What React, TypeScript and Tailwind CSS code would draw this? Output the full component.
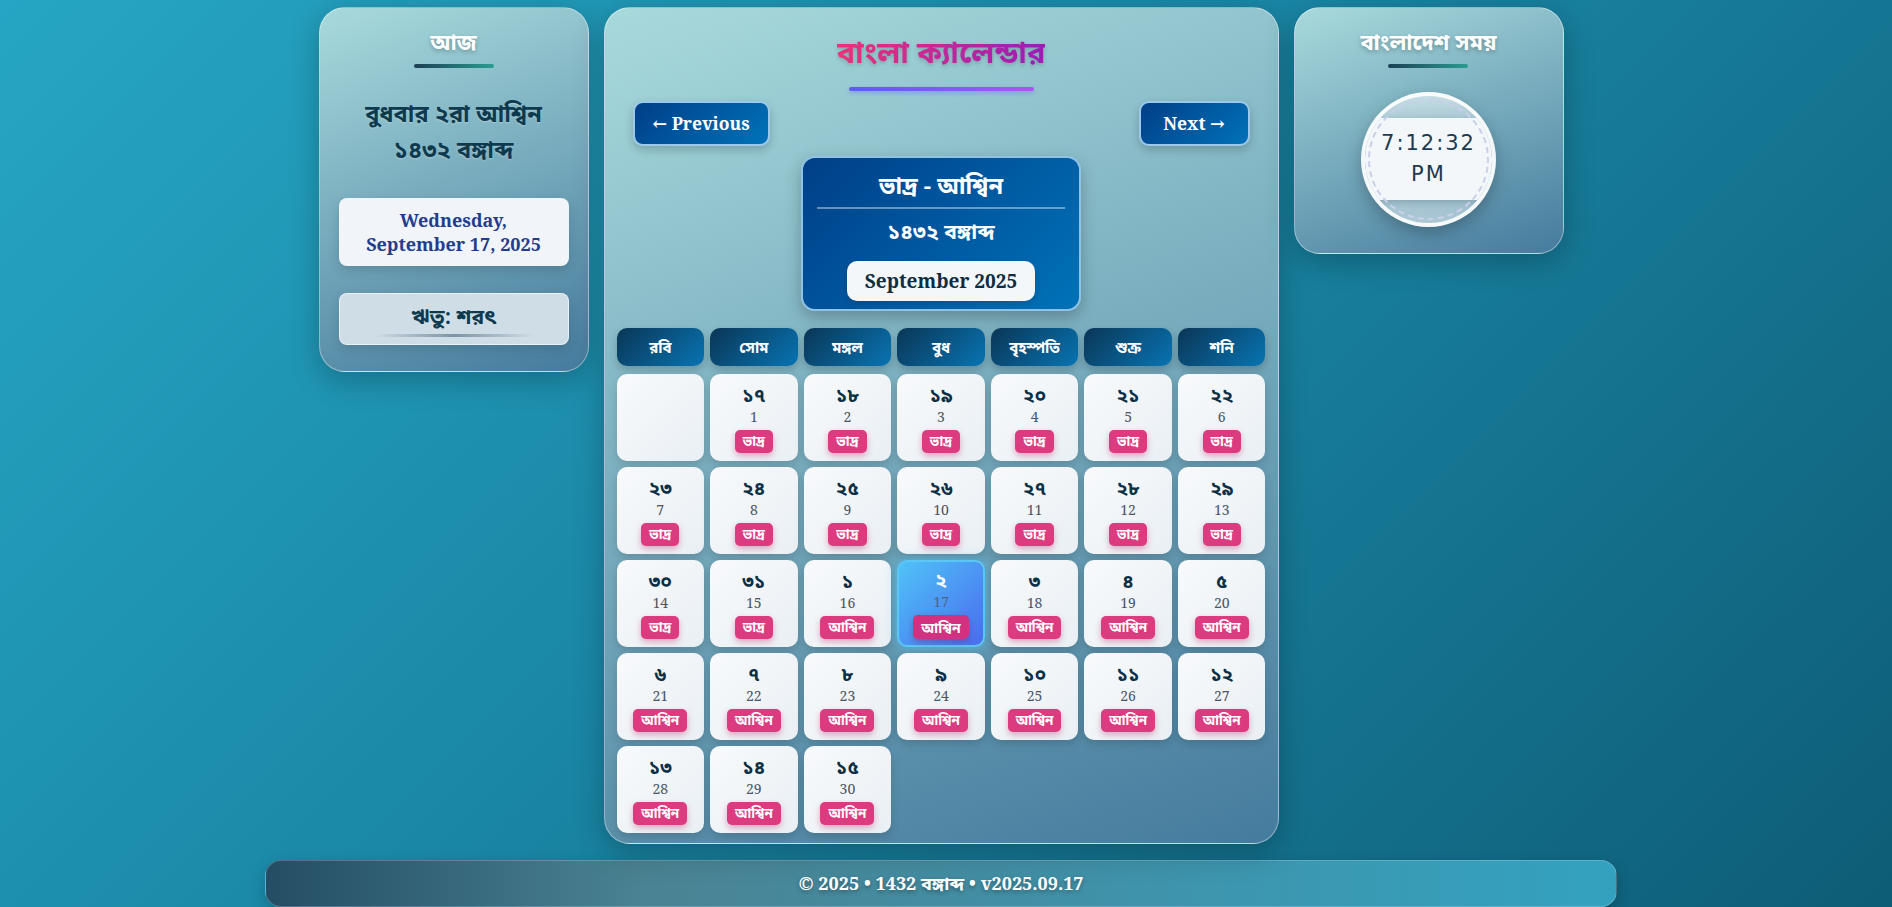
import React from "react";

const BN = ["০", "১", "২", "৩", "৪", "৫", "৬", "৭", "৮", "৯"];
const toBn = (n: number) =>
  String(n)
    .split("")
    .map((d) => BN[+d])
    .join("");

const WEEK = ["রবি", "সোম", "মঙ্গল", "বুধ", "বৃহস্পতি", "শুক্র", "শনি"];

const FONT = {
  fontFamily:
    '"Noto Serif", "Noto Sans Bengali", "Noto Serif Bengali", "DejaVu Serif", serif',
};

type Cell = { bn: string; greg: number; month: string; today: boolean } | null;

function buildCells(): Cell[] {
  const cells: Cell[] = [null];
  for (let i = 1; i <= 30; i++) {
    cells.push({
      bn: toBn(i <= 15 ? i + 16 : i - 15),
      greg: i,
      month: i <= 15 ? "ভাদ্র" : "আশ্বিন",
      today: i === 17,
    });
  }
  return cells;
}

function SideTitle({ children }: { children: React.ReactNode }) {
  return (
    <div className="flex flex-col items-center">
      <div className="text-[22px] leading-[30px] font-bold text-white [text-shadow:0_2px_4px_rgba(0,0,0,0.25)]">
        {children}
      </div>
      <div className="mt-[8px] w-[80px] h-[4px] rounded-full bg-[linear-gradient(90deg,#1d3f55,#2a9d8f)]" />
    </div>
  );
}

function DayCell({ c }: { c: Cell }) {
  if (!c)
    return (
      <div className="h-[87px] rounded-[10px] bg-[linear-gradient(135deg,#f8fafc,#e9eff4)] shadow-[0_4px_10px_rgba(0,0,0,0.15)]" />
    );
  if (c.today)
    return (
      <div className="h-[87px] rounded-[10px] border-2 border-[#5cc6f5] bg-[linear-gradient(135deg,#4fc3f7,#4a6cf0)] shadow-[0_0_12px_rgba(79,195,247,0.7)] flex flex-col items-center justify-center">
        <div className="text-[19px] leading-[24px] font-bold text-white">{c.bn}</div>
        <div className="text-[14px] leading-[20px] text-[#4a6690]">{c.greg}</div>
        <div className="mt-[3px] h-[24px] px-[8px] rounded-[5px] bg-[#d3307f] text-white text-[14px] font-bold flex items-center shadow-[0_3px_6px_rgba(120,20,80,0.35)]">
          {c.month}
        </div>
      </div>
    );
  return (
    <div className="h-[87px] rounded-[10px] bg-[linear-gradient(135deg,#f8fafc,#e9eff4)] shadow-[0_4px_10px_rgba(0,0,0,0.15)] flex flex-col items-center justify-center">
      <div className="text-[19px] leading-[24px] font-bold text-[#0b2f45]">{c.bn}</div>
      <div className="text-[14px] leading-[20px] text-[#4b5563]">{c.greg}</div>
      <div className="mt-[3px] h-[23px] px-[8px] rounded-[5px] bg-[#dd3b80] text-white text-[13.5px] font-bold flex items-center shadow-[0_3px_6px_rgba(190,24,93,0.35)]">
        {c.month}
      </div>
    </div>
  );
}

export default function App() {
  const cells = buildCells();
  const card =
    "rounded-[26px] border border-white/40 bg-[linear-gradient(160deg,#a8dadc,#457b9d)] shadow-[0_8px_30px_rgba(0,0,0,0.25)]";
  return (
    <div
      style={FONT}
      className="min-h-screen bg-[linear-gradient(135deg,#26a6c4_0%,#1a87a6_45%,#0e5c76_100%)] pt-[7px] pb-[16px] pr-[10px]"
    >
      <div className="max-w-[1352px] mx-auto">
        <div className="flex justify-center items-start gap-[15px]">
          {/* Left card */}
          <div className={`w-[270px] ${card} px-[19px] pt-[18px] pb-[26px] flex flex-col items-center`}>
            <SideTitle>আজ</SideTitle>
            <div className="mt-[27px] text-[23.5px] leading-[36px] font-bold text-[#0e3a50] text-center [text-shadow:0_1px_2px_rgba(255,255,255,0.3)]">
              বুধবার ২রা আশ্বিন
              <br />
              ১৪৩২ বঙ্গাব্দ
            </div>
            <div className="mt-[31px] w-full rounded-[8px] bg-[#f1f5f9] shadow-[0_4px_12px_rgba(0,0,0,0.15)] py-[10px] text-center text-[18px] leading-[24px] font-bold text-[#233d8c]">
              Wednesday,
              <br />
              September 17, 2025
            </div>
            <div className="mt-[27px] w-full h-[52px] pb-[6px] rounded-[8px] bg-[#cfdde6] border border-white/60 shadow-[0_4px_12px_rgba(0,0,0,0.12)] flex flex-col items-center justify-center relative">
              <div className="text-[21px] leading-[28px] font-bold text-[#0e3a50]">ঋতু: শরৎ</div>
              <div className="absolute bottom-[7px] w-[160px] h-[3px] rounded-full bg-[linear-gradient(90deg,transparent,#7d93a5,transparent)]" />
            </div>
          </div>

          {/* Center card */}
          <div className={`w-[675px] ${card} px-[12px] pt-[19px] pb-[10px]`}>
            <div className="flex flex-col items-center">
              <div className="text-[30.5px] leading-[48px] font-bold bg-[linear-gradient(90deg,#ea3378,#9b1cb8)] bg-clip-text text-transparent drop-shadow-[0_2px_2px_rgba(0,0,0,0.2)]">
                বাংলা ক্যালেন্ডার
              </div>
              <div className="mt-[12px] w-[185px] h-[4px] rounded-full bg-[linear-gradient(90deg,#5b5cf2,#a855f7)] shadow-[0_2px_4px_rgba(91,92,242,0.4)]" />
            </div>
            <div className="mt-[10px] flex justify-between px-[16px]">
              <button className="h-[45px] w-[137px] rounded-[10px] border-2 border-[#9cc9e9] bg-[linear-gradient(135deg,#003f88,#0072b8)] text-white text-[17.5px] font-bold shadow-[0_4px_10px_rgba(0,0,0,0.2)]">
                ← Previous
              </button>
              <button className="h-[45px] w-[111px] rounded-[10px] border-2 border-[#9cc9e9] bg-[linear-gradient(135deg,#003f88,#0072b8)] text-white text-[17.5px] font-bold shadow-[0_4px_10px_rgba(0,0,0,0.2)]">
                Next →
              </button>
            </div>
            <div className="mt-[10px] flex justify-center">
              <div className="w-[280px] rounded-[14px] border-2 border-[#8ec3e6] bg-[linear-gradient(135deg,#003f88,#0072b8)] shadow-[0_6px_16px_rgba(0,0,0,0.25)] px-[14px] pt-[10px] pb-[8px] flex flex-col items-center">
                <div className="text-[23.5px] leading-[34px] font-bold text-white">ভাদ্র - আশ্বিন</div>
                <div className="mt-[5px] w-full h-[2px] bg-white/40" />
                <div className="mt-[7px] text-[21px] leading-[30px] font-bold text-white">১৪৩২ বঙ্গাব্দ</div>
                <div className="mt-[15px] w-[188px] h-[40px] rounded-[10px] bg-[#f4f7fa] flex items-center justify-center text-[19px] font-bold text-[#0f2d40] shadow-[0_2px_6px_rgba(0,0,0,0.15)]">
                  September 2025
                </div>
              </div>
            </div>
            <div className="mt-[17px] grid grid-cols-7 gap-[6px]">
              {WEEK.map((w) => (
                <div
                  key={w}
                  className="h-[38px] rounded-[10px] bg-[linear-gradient(135deg,#0a3656,#0874b2)] shadow-[0_4px_8px_rgba(0,0,0,0.2)] flex items-center justify-center text-white text-[15px] font-bold"
                >
                  {w}
                </div>
              ))}
            </div>
            <div className="mt-[8px] grid grid-cols-7 gap-x-[6px] gap-y-[6px]">
              {cells.map((c, i) => (
                <DayCell key={i} c={c} />
              ))}
            </div>
          </div>

          {/* Right card */}
          <div className={`w-[270px] ${card} px-[19px] pt-[18px] pb-[26px] flex flex-col items-center`}>
            <SideTitle>বাংলাদেশ সময়</SideTitle>
            <div className="mt-[24px] relative w-[135px] h-[135px] rounded-full border-[4px] border-white/90 overflow-hidden bg-[linear-gradient(180deg,rgba(255,255,255,0.55),rgba(140,180,195,0.6)_45%,rgba(255,255,255,0.5))] shadow-[0_6px_16px_rgba(0,0,0,0.25)]">
              <div className="absolute left-0 right-0 top-[22px] h-[82px] bg-[#f3f7fa] shadow-[0_2px_6px_rgba(0,0,0,0.15)] flex flex-col items-center justify-center">
                <div
                  className="text-[21px] leading-[31px] font-medium tracking-[2px] text-[#1c3a50]"
                  style={{ fontFamily: '"DejaVu Sans", sans-serif' }}
                >
                  7:12:32
                </div>
                <div
                  className="text-[21px] leading-[31px] font-medium tracking-[2px] text-[#1c3a50]"
                  style={{ fontFamily: '"DejaVu Sans", sans-serif' }}
                >
                  PM
                </div>
              </div>
              <div className="absolute inset-[3px] rounded-full border-2 border-dashed border-[#c8d0ea]" />
            </div>
          </div>
        </div>

        <div className="mt-[16px] h-[47px] rounded-[16px] border border-white/20 bg-[linear-gradient(90deg,#244d64,#4a8393_28%,#3f93ab_65%,#33a2bf)] shadow-[0_6px_16px_rgba(0,0,0,0.2)] flex items-center justify-center text-white text-[18px] font-bold [text-shadow:0_2px_4px_rgba(0,0,0,0.35)]">
          © 2025 • 1432 বঙ্গাব্দ • v2025.09.17
        </div>
      </div>
    </div>
  );
}
